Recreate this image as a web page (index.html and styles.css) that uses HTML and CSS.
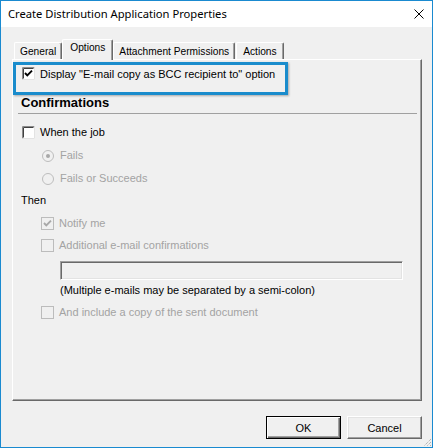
FILE: index.html
```html
<!DOCTYPE html>
<html>
<head>
<meta charset="utf-8">
<link rel="stylesheet" href="styles.css">
</head>
<body>
<div class="window">
  <div class="titlebar">
    <span class="title">Create Distribution Application Properties</span>
    <svg class="close" width="10" height="10" viewBox="0 0 10 10"><path d="M0.5 0.5L9.5 9.5M9.5 0.5L0.5 9.5" stroke="#000" stroke-width="1" fill="none"/></svg>
  </div>
  <div class="client">
    <div class="tabs">
      <div class="tab">General</div>
      <div class="tab selected">Options</div>
      <div class="tab">Attachment Permissions</div>
      <div class="tab tab-last">Actions</div>
    </div>
    <div class="panel">
      <div class="highlight">
        <div class="row">
          <svg class="cb" width="13" height="13" viewBox="0 0 13 13"><rect x="0" y="0" width="13" height="13" fill="#fff"/><path d="M0.5 12.5V0.5H12.5" stroke="#8a8a8a" fill="none"/><path d="M1.5 11.5V1.5H11.5" stroke="#404040" fill="none"/><path d="M0.5 12.5H12.5V0.5" stroke="#e3e3e3" fill="none"/><path d="M3 6L5.3 8.4L10 3.6" stroke="#000" stroke-width="1.9" fill="none"/></svg>
          <span class="label">Display "E-mail copy as BCC recipient to" option</span>
        </div>
      </div>
      <div class="heading">Confirmations</div>
      <div class="sep"></div>
      <div class="row row-when">
        <svg class="cb" width="13" height="13" viewBox="0 0 13 13"><rect x="0" y="0" width="13" height="13" fill="#fff"/><path d="M0.5 12.5V0.5H12.5" stroke="#8a8a8a" fill="none"/><path d="M1.5 11.5V1.5H11.5" stroke="#404040" fill="none"/><path d="M0.5 12.5H12.5V0.5" stroke="#e3e3e3" fill="none"/></svg>
        <span class="label">When the job</span>
      </div>
      <div class="row row-indent row-fails disabled">
        <svg class="rb" width="12" height="12" viewBox="0 0 12 12"><circle cx="6" cy="6" r="5.5" fill="#f0f0f0" stroke="#bcbcbc"/><circle cx="6" cy="6" r="2" fill="#a8a8a8"/></svg>
        <span class="label">Fails</span>
      </div>
      <div class="row row-indent row-gap10 disabled">
        <svg class="rb" width="12" height="12" viewBox="0 0 12 12"><circle cx="6" cy="6" r="5.5" fill="#f0f0f0" stroke="#bcbcbc"/></svg>
        <span class="label">Fails or Succeeds</span>
      </div>
      <div class="then">Then</div>
      <div class="row row-indent row-gap10 disabled">
        <svg class="cb" width="13" height="13" viewBox="0 0 13 13"><rect x="0.5" y="0.5" width="12" height="12" fill="#f0f0f0" stroke="#bcbcbc"/><path d="M3 6L5.3 8.4L10 3.6" stroke="#a8a8a8" stroke-width="1.9" fill="none"/></svg>
        <span class="label">Notify me</span>
      </div>
      <div class="row row-indent row-gap9 disabled">
        <svg class="cb" width="13" height="13" viewBox="0 0 13 13"><rect x="0.5" y="0.5" width="12" height="12" fill="#f0f0f0" stroke="#bcbcbc"/></svg>
        <span class="label">Additional e-mail confirmations</span>
      </div>
      <div class="textbox"></div>
      <div class="note">(Multiple e-mails may be separated by a semi-colon)</div>
      <div class="row row-indent row-gap9 disabled">
        <svg class="cb" width="13" height="13" viewBox="0 0 13 13"><rect x="0.5" y="0.5" width="12" height="12" fill="#f0f0f0" stroke="#bcbcbc"/></svg>
        <span class="label">And include a copy of the sent document</span>
      </div>
    </div>
    <div class="buttons">
      <button class="btn btn-default">OK</button>
      <button class="btn">Cancel</button>
    </div>
  </div>
  <svg class="grip" width="10" height="10" viewBox="0 0 10 10">
    <path d="M9 2L2 9M9 5L5 9M9 8L8 9" stroke="#9a9a9a" stroke-width="1" stroke-dasharray="1 1" fill="none"/>
  </svg>
</div>
</body>
</html>
```

FILE: styles.css
```css
* { box-sizing: border-box; }
html, body { margin: 0; padding: 0; }
body {
  width: 433px;
  height: 448px;
  overflow: hidden;
  font-family: "Liberation Sans", Arial, sans-serif;
  font-size: 11px;
  color: #000;
  background: #f0f0f0;
}
.window {
  position: relative;
  width: 433px;
  height: 448px;
  border: 1px solid #1a8ad0;
  background: #f0f0f0;
  display: flex;
  flex-direction: column;
}
.titlebar {
  height: 26px;
  flex: none;
  background: #fff;
  display: flex;
  align-items: center;
  justify-content: space-between;
  padding: 0 8px 0 7px;
}
.title {
  font-family: "Noto Sans", "Open Sans", sans-serif;
  font-size: 11.2px;
  line-height: 16px;
}
.close { display: block; margin-top: -1px; }
.client {
  flex: 1;
  display: flex;
  flex-direction: column;
  padding: 12px 10px 0 11px;
}
.tabs {
  display: flex;
  align-items: flex-end;
  height: 20px;
  padding-left: 2px;
  position: relative;
  z-index: 1;
}
.tab {
  height: 17px;
  padding: 2px 5px 0 5px;
  font-size: 10.2px;
  line-height: 13px;
  border-top: 1px solid #fff;
  border-left: 1px solid #fff;
  border-right: 1px solid #696969;
  box-shadow: inset -1px 0 0 #a0a0a0;
  border-radius: 2px 2px 0 0;
  white-space: nowrap;
}
.tab.selected {
  height: 21px;
  margin-bottom: -1px;
  padding: 1px 7px 0 7px;
  background: #f0f0f0;
}
.tab-last { margin-left: 1px; padding: 2px 6px 0 6px; }
.panel {
  height: 342px;
  flex: none;
  border-top: 1px solid #fff;
  border-left: 1px solid #fff;
  border-right: 1px solid #696969;
  border-bottom: 1px solid #696969;
  box-shadow: inset -1px -1px 0 #a0a0a0;
  display: flex;
  flex-direction: column;
}
.highlight {
  margin-top: 2px;
  width: 275px;
  height: 33px;
  border: 3px solid #1a8ccc;
  box-shadow: 1px 1px 2px rgba(0, 0, 0, 0.3);
  padding: 2px 0 0 6px;
}
.row {
  display: flex;
  align-items: center;
  height: 13px;
  gap: 5px;
}
.cb, .rb { display: block; flex: none; }
.label { line-height: 13px; white-space: nowrap; }
.highlight .label { margin-top: 2px; }
.heading {
  font-weight: bold;
  font-size: 13px;
  line-height: 15px;
  padding-left: 8px;
}
.sep {
  margin: 3px 4px 0 5px;
  height: 1px;
  background: #a0a0a0;
}
.row-when { margin-top: 12px; padding-left: 9px; }
.row-indent { padding-left: 28px; }
.row-indent .rb { margin-right: 1px; margin-left: 1px; }
.row-fails { margin-top: 10px; }
.row-gap10 { margin-top: 10px; }
.row-gap9 { margin-top: 9px; }
.disabled { color: #a3a3a3; }
.then {
  margin-top: 9px;
  line-height: 13px;
  padding-left: 8px;
}
.textbox {
  margin: 9px 0 0 47px;
  width: 343px;
  height: 19px;
  border-top: 1px solid #a0a0a0;
  border-left: 1px solid #a0a0a0;
  border-right: 1px solid #fff;
  border-bottom: 1px solid #fff;
  box-shadow: inset 1px 1px 0 #696969, inset -1px -1px 0 #e3e3e3;
  background: #f0f0f0;
}
.note {
  margin: 4px 0 0 47px;
  line-height: 13px;
}
.buttons {
  display: flex;
  justify-content: flex-end;
  gap: 6px;
  margin-top: 15px;
}
.btn {
  width: 75px;
  height: 23px;
  padding: 0;
  font-family: "Liberation Sans", Arial, sans-serif;
  font-size: 11px;
  color: #000;
  background: #f0f0f0;
  border-top: 1px solid #fff;
  border-left: 1px solid #fff;
  border-right: 1px solid #696969;
  border-bottom: 1px solid #696969;
  box-shadow: inset -1px -1px 0 #a0a0a0, inset 1px 1px 0 #e3e3e3;
}
.btn-default {
  border: 1px solid #000;
  box-shadow: inset 1px 1px 0 #fff, inset -1px -1px 0 #696969, inset -2px -2px 0 #a0a0a0;
}
.grip {
  position: absolute;
  right: 0;
  bottom: 0;
}
```
